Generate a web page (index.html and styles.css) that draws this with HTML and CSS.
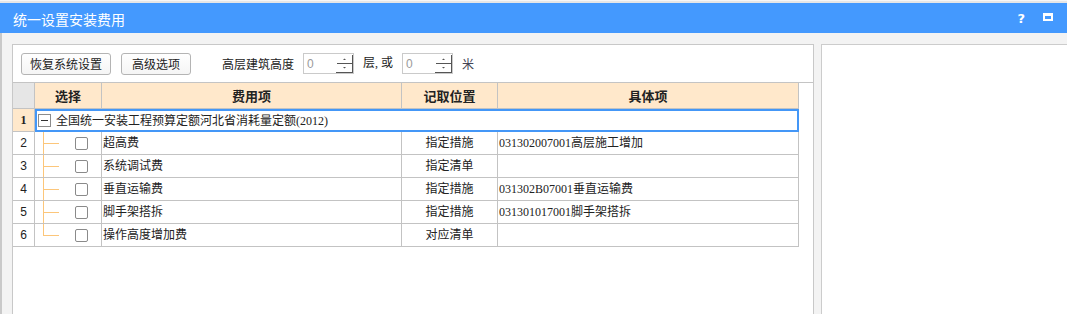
FILE: index.html
```html
<!DOCTYPE html>
<html lang="zh-CN">
<head>
<meta charset="utf-8">
<title>统一设置安装费用</title>
<link rel="stylesheet" href="styles.css">
</head>
<body>
<div class="topstrip"></div>
<div class="titlebar">
  <span class="title">统一设置安装费用</span>
  <div class="tb-icons">
    <span class="help">?</span>
    <svg class="maxicon" width="10" height="8" viewBox="0 0 10 8"><path d="M0 0H10V8H0Z M2 3H8V6H2Z" fill="#fff" fill-rule="evenodd"/></svg>
  </div>
</div>
<div class="content">
  <div class="leftpanel">
    <div class="toolbar">
      <button class="btn btn-restore">恢复系统设置</button>
      <button class="btn btn-adv">高级选项</button>
      <span class="lbl lbl-height">高层建筑高度</span>
      <div class="spin">
        <span class="spin-val">0</span>
        <svg class="spin-btn" width="17" height="19" viewBox="0 0 17 19">
          <path d="M16.5 1V19 M0 18.5H17 M1 9.5H17" stroke="#555" stroke-width="1" fill="none"/>
          <path d="M7 6H10L8.5 4.5Z" fill="#555"/>
          <path d="M7 13H10L8.5 14.5Z" fill="#555"/>
        </svg>
      </div>
      <span class="lbl lbl-or">层, 或</span>
      <div class="spin">
        <span class="spin-val">0</span>
        <svg class="spin-btn" width="17" height="19" viewBox="0 0 17 19">
          <path d="M16.5 1V19 M0 18.5H17 M1 9.5H17" stroke="#555" stroke-width="1" fill="none"/>
          <path d="M7 6H10L8.5 4.5Z" fill="#555"/>
          <path d="M7 13H10L8.5 14.5Z" fill="#555"/>
        </svg>
      </div>
      <span class="lbl lbl-m">米</span>
    </div>
    <div class="grid">
      <div class="c hd corner"></div>
      <div class="c hd">选择</div>
      <div class="c hd">费用项</div>
      <div class="c hd">记取位置</div>
      <div class="c hd">具体项</div>

      <div class="c rn rn-sel">1</div>
      <div class="c group"><span class="minus"></span><span class="gtext">全国统一安装工程预算定额河北省消耗量定额(2012)</span></div>

      <div class="c rn">2</div>
      <div class="c sel"><svg class="tree" width="30" height="22" viewBox="0 0 30 22"><path d="M8.5 0V23 M8 11.5H24" stroke="#fcc67a" fill="none"/></svg><span class="cb"></span></div>
      <div class="c name">超高费</div>
      <div class="c pos">指定措施</div>
      <div class="c det">031302007001高层施工增加</div>

      <div class="c rn">3</div>
      <div class="c sel"><svg class="tree" width="30" height="22" viewBox="0 0 30 22"><path d="M8.5 0V23 M8 11.5H24" stroke="#fcc67a" fill="none"/></svg><span class="cb"></span></div>
      <div class="c name">系统调试费</div>
      <div class="c pos">指定清单</div>
      <div class="c det"></div>

      <div class="c rn">4</div>
      <div class="c sel"><svg class="tree" width="30" height="22" viewBox="0 0 30 22"><path d="M8.5 0V23 M8 11.5H24" stroke="#fcc67a" fill="none"/></svg><span class="cb"></span></div>
      <div class="c name">垂直运输费</div>
      <div class="c pos">指定措施</div>
      <div class="c det">031302B07001垂直运输费</div>

      <div class="c rn">5</div>
      <div class="c sel"><svg class="tree" width="30" height="22" viewBox="0 0 30 22"><path d="M8.5 0V23 M8 11.5H24" stroke="#fcc67a" fill="none"/></svg><span class="cb"></span></div>
      <div class="c name">脚手架搭拆</div>
      <div class="c pos">指定措施</div>
      <div class="c det">031301017001脚手架搭拆</div>

      <div class="c rn">6</div>
      <div class="c sel"><svg class="tree" width="30" height="22" viewBox="0 0 30 22"><path d="M8.5 0V11.5 M8 11.5H24" stroke="#fcc67a" fill="none"/></svg><span class="cb"></span></div>
      <div class="c name">操作高度增加费</div>
      <div class="c pos">对应清单</div>
      <div class="c det"></div>
    </div>
  </div>
  <div class="rightpanel"></div>
</div>
</body>
</html>
```
FILE: styles.css
```css
* { box-sizing: border-box; }
html, body { margin: 0; padding: 0; }
body {
  width: 1067px;
  height: 314px;
  overflow: hidden;
  background: #f3f3f3;
  font-family: "Liberation Serif", "Noto Sans CJK SC", serif;
  font-size: 12px;
  color: #222;
}
.topstrip {
  height: 3px;
  background: #e6e6e6;
  border-top: 1px solid #f6f6f6;
}
.titlebar {
  height: 30px;
  background: #4499fe;
  display: flex;
  align-items: center;
  justify-content: space-between;
  padding: 0 14px 0 13px;
}
.title {
  font-family: "Noto Sans CJK SC", sans-serif;
  font-size: 14px;
  line-height: 16px;
  color: #fff;
  padding-top: 2px;
}
.tb-icons {
  display: flex;
  align-items: center;
  gap: 18px;
}
.help {
  font-family: "DejaVu Sans", sans-serif;
  font-weight: bold;
  font-size: 13px;
  line-height: 14px;
  color: #fff;
  padding-top: 1px;
}
.maxicon { display: block; margin-top: -2px; }
.content {
  height: 281px;
  display: flex;
  gap: 7px;
  padding: 11px 0 0 12px;
  border-left: 2px solid #c9c9c9;
  padding-left: 10px;
}
.leftpanel {
  width: 802px;
  flex: none;
  background: #fff;
  border: 1px solid #c8c8c8;
  border-bottom: none;
}
.rightpanel {
  flex: 1;
  background: #fff;
  border-top: 1px solid #cccccc;
  border-left: 1px solid #cccccc;
}
.toolbar {
  height: 38px;
  border-bottom: 1px solid #c4c4c4;
  display: flex;
  align-items: flex-start;
  padding: 8px 0 0 8px;
}
.btn {
  height: 22px;
  border: 1px solid #b4b4b4;
  border-radius: 3px;
  background: linear-gradient(#ffffff, #f5f5f5);
  font-family: "Noto Sans CJK SC", sans-serif;
  font-size: 12px;
  line-height: 14px;
  color: #222;
  padding: 0;
  display: flex;
  align-items: center;
  justify-content: center;
}
.btn-restore { width: 90px; }
.btn-adv { width: 70px; margin-left: 10px; }
.lbl {
  font-family: "Noto Sans CJK SC", sans-serif;
  font-size: 12px;
  line-height: 21px;
  color: #222;
}
.lbl-height { margin-left: 31px; }
.lbl-or { margin-left: 9px; font-family: "Liberation Serif", "Noto Sans CJK SC", serif; }
.lbl-m { margin-left: 9px; color: #445; }
.spin {
  width: 51px;
  height: 21px;
  border: 1px solid #cacaca;
  background: #fff;
  margin-left: 9px;
  display: flex;
  align-items: center;
  justify-content: space-between;
  padding-left: 3px;
}
.lbl-height + .spin { margin-left: 9px; }
.spin-val {
  font-family: "Liberation Sans", sans-serif;
  font-size: 12px;
  color: #9a9a9a;
  line-height: 14px;
}
.spin-btn { display: block; align-self: flex-end; }
.grid {
  display: grid;
  grid-template-columns: 22px 67px 300px 96px 301px;
  grid-template-rows: 26px 23px repeat(5, 23px);
}
.c {
  border-right: 1px solid #c3c3c3;
  border-bottom: 1px solid #c3c3c3;
  display: flex;
  align-items: center;
  line-height: 14px;
  overflow: hidden;
  white-space: nowrap;
}
.hd {
  background: #ffe8cb;
  justify-content: center;
  font-family: "Noto Sans CJK SC", sans-serif;
  font-weight: bold;
  font-size: 13px;
  color: #222;
}
.hd.corner { background: #e6e6e6; }
.rn {
  justify-content: center;
  font-family: "Liberation Sans", sans-serif;
  font-size: 12px;
}
.rn-sel {
  background: #ffe8cb;
  font-family: "Liberation Serif", serif;
  font-weight: bold;
}
.group {
  grid-column: 2 / 6;
  border: 2px solid #4497f7;
  padding-left: 1px;
}
.minus {
  width: 13px;
  height: 13px;
  border: 1px solid #8c8c8c;
  background: #fff;
  display: flex;
  align-items: center;
  justify-content: center;
  flex: none;
}
.minus::after {
  content: "";
  width: 7px;
  height: 1px;
  background: #333;
}
.gtext { margin-left: 5px; }
.sel { align-items: stretch; }
.tree { display: block; flex: none; }
.cb {
  width: 13px;
  height: 13px;
  border: 1px solid #8a8a8a;
  border-radius: 2px;
  background: #fff;
  margin-left: 10px;
  align-self: center;
  flex: none;
}
.name { padding-left: 1px; }
.pos { justify-content: center; }
.det { padding-left: 1px; }
```
